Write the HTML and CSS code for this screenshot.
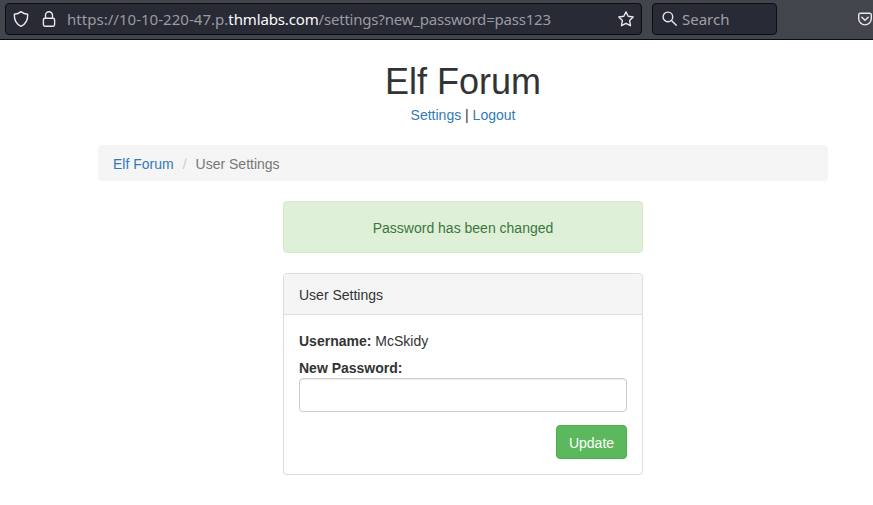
FILE: index.html
```html
<!DOCTYPE html>
<html lang="en">
<head>
<meta charset="utf-8">
<title>Elf Forum</title>
<link rel="stylesheet" href="styles.css">
</head>
<body>
<header class="toolbar">
  <div class="field address">
    <svg class="icon shield" width="18" height="18" viewBox="0 0 18 18"><path d="M9 1.6C7.2 3.1 4.8 4 2.3 4.3C2.1 10 4.2 14.2 9 16.3C13.8 14.2 15.9 10 15.7 4.3C13.2 4 10.8 3.1 9 1.6Z"/></svg>
    <svg class="icon lock" width="18" height="18" viewBox="0 0 18 18"><rect x="3.4" y="8.2" width="11.2" height="8" rx="1.6"/><path d="M5.5 8V5.2a3.5 3.5 0 0 1 7 0V8"/></svg>
    <span class="url"><span class="scheme">https://10-10-220-47.p.</span><span class="domain">thmlabs.com</span><span class="path">/settings?new_password=pass123</span></span>
    <svg class="icon star" width="18" height="18" viewBox="0 0 18 18"><path d="M9 1.9L11.2 6.3L16.2 7L12.6 10.5L13.5 15.7L9 13.3L4.5 15.7L5.4 10.5L1.8 7L6.8 6.3Z"/></svg>
  </div>
  <div class="field search">
    <svg class="icon" width="18" height="18" viewBox="0 0 18 18"><circle cx="6.9" cy="6.9" r="4.8"/><path d="M10.5 10.5L15.3 15.3"/></svg>
    <span class="placeholder">Search</span>
  </div>
  <svg class="icon pocket" width="16" height="18" viewBox="0 0 16 18"><path d="M3.2 3.2H12.8a1.5 1.5 0 0 1 1.5 1.5V8.6a6.3 6.3 0 0 1-12.6 0V4.7a1.5 1.5 0 0 1 1.5-1.5Z"/><path d="M4.8 7.2L8 10.2L11.2 7.2"/></svg>
</header>
<main class="container">
  <h1>Elf Forum</h1>
  <nav class="links"><a href="#">Settings</a> | <a href="#">Logout</a></nav>
  <ol class="breadcrumb">
    <li><a href="#">Elf Forum</a></li>
    <li class="current">User Settings</li>
  </ol>
  <div class="column">
    <div class="alert">Password has been changed</div>
    <section class="panel">
      <div class="panel-heading">User Settings</div>
      <form class="panel-body">
        <div class="username"><b>Username:</b> McSkidy</div>
        <label for="password">New Password:</label>
        <input id="password" type="password">
        <button type="button">Update</button>
      </form>
    </section>
  </div>
</main>
</body>
</html>
```
FILE: styles.css
```css
* { box-sizing: border-box; }
body {
  margin: 0;
  background: #fff;
  color: #333;
  font: 14px/20px "Liberation Sans", Arial, sans-serif;
  overflow: hidden;
}
a { color: #337ab7; text-decoration: none; }

.toolbar {
  display: flex;
  height: 40px;
  padding: 3px 0 4px 5px;
  background: #42454c;
  border-bottom: 1px solid #0c0d12;
  font: 15px/20px "Noto Sans", sans-serif;
}
.field {
  display: flex;
  flex: none;
  align-items: center;
  height: 32px;
  background: #282a35;
  border: 1px solid #0c0d12;
  border-radius: 4px;
}
.address { width: 637px; margin-right: 10px; padding: 0 6px; }
.search { width: 125px; padding-left: 8px; }
.icon {
  flex: none;
  fill: none;
  stroke: #e8e8ea;
  stroke-width: 1.4;
  stroke-linecap: round;
  stroke-linejoin: round;
}
.lock { margin-left: 10px; }
.url { margin-left: 9px; color: #9a9ba1; white-space: nowrap; }
.scheme { letter-spacing: .03px; }
.domain { color: #fbfbfe; letter-spacing: -.14px; }
.path { letter-spacing: -.2px; }
.star { margin-left: auto; }
.placeholder { margin-left: 3px; color: #a0a1a6; }
.pocket { margin: 7px 0 0 80px; }

.container { width: 730px; margin: 0 0 0 98px; padding-top: 22px; }
h1 {
  margin: 0;
  font-size: 36px;
  font-weight: 400;
  line-height: 39px;
  text-align: center;
}
.links { margin: 4px 0 20px; text-align: center; }
.breadcrumb {
  display: flex;
  height: 36px;
  margin: 0 0 20px;
  padding: 9px 15px 7px;
  background: #f5f5f5;
  border-radius: 4px;
  list-style: none;
}
.current { color: #777; }
.current::before { content: "/"; padding: 0 9px; color: #ccc; }
.column { width: 360px; margin: 0 auto; }
.alert {
  height: 52px;
  margin-bottom: 20px;
  padding: 16px 15px 14px;
  background: #dff0d8;
  border: 1px solid #d6e9c6;
  border-radius: 4px;
  color: #3c763d;
  text-align: center;
}
.panel {
  height: 202px;
  border: 1px solid #ddd;
  border-radius: 4px;
  box-shadow: 0 1px 1px rgba(0, 0, 0, .05);
}
.panel-heading {
  height: 41px;
  padding: 11px 15px 9px;
  background: #f5f5f5;
  border-bottom: 1px solid #ddd;
  border-radius: 3px 3px 0 0;
}
.panel-body { display: flex; flex-direction: column; padding: 16px 15px 15px; }
.username { margin-bottom: 7px; }
label { font-weight: 700; }
input {
  width: 100%;
  height: 34px;
  padding: 6px 12px;
  border: 1px solid #ccc;
  border-radius: 4px;
  box-shadow: inset 0 1px 1px rgba(0, 0, 0, .075);
}
button {
  align-self: flex-end;
  width: 71px;
  height: 34px;
  margin-top: 13px;
  padding: 2px 0 0;
  background: #5cb85c;
  border: 1px solid #4cae4c;
  border-radius: 4px;
  color: #fff;
  font: inherit;
}
```
